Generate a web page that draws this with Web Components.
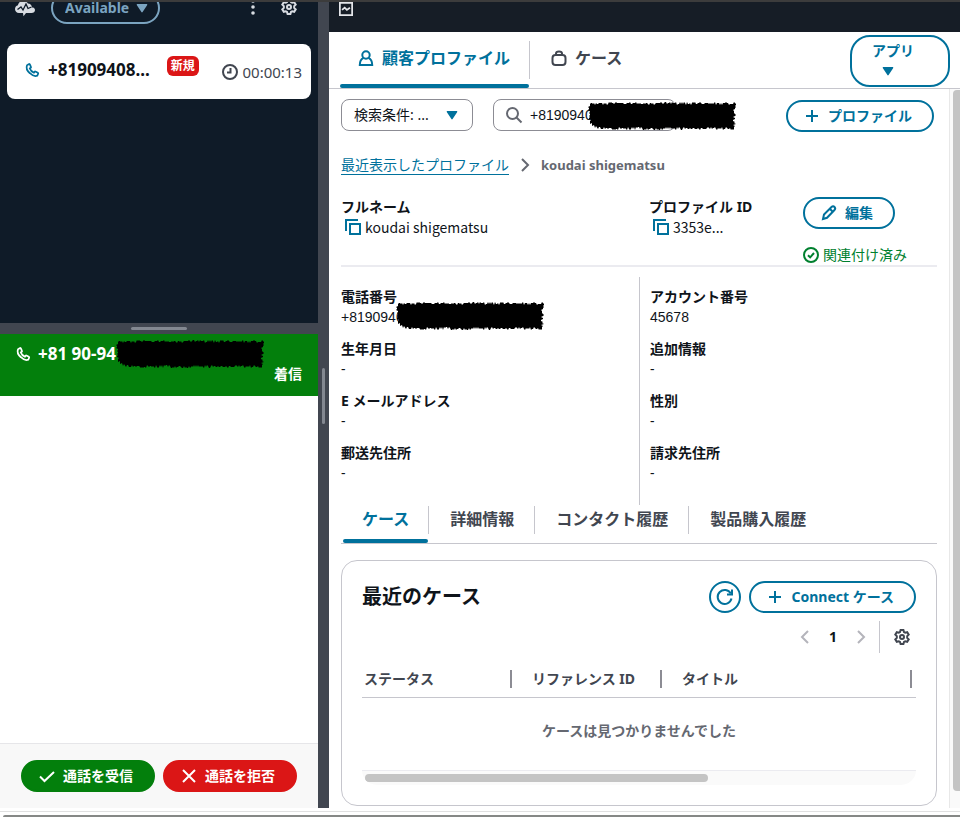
<!DOCTYPE html>
<html lang="ja">
<head>
<meta charset="utf-8">
<meta name="viewport" content="width=device-width, initial-scale=1">
<title>Agent workspace</title>
<style>
  :root {
    --teal: #00719c;
    --navy: #0f1b28;
    --slate: #414650;
    --ink: #0f141a;
    --gray: #656871;
    --line: #c6c6cd;
    --green: #037f0c;
    --red: #db1616;
    --arial: "Liberation Sans", "Noto Sans CJK JP", sans-serif;
  }
  body {
    margin: 0;
    font: 14px/20px "Noto Sans", "Noto Sans CJK JP", sans-serif;
    color: var(--ink);
    background: #fff;
  }
</style>
</head>
<body>
<agent-workspace></agent-workspace>

<script>
const ICONS = {
  phone: '<path d="M4.6 1.2 2.3 2.6C1 5.900 3 9.500 5.600 11.700c2.600 2.500 5.700 3.900 8.500 2.700l1-2.300c.1-.4 0-.7-.4-.9L11.900 9.700c-.3-.2-.7-.1-.9.2l-.8 1.100C8.200 10.200 6.200 8.200 5.500 6.200l1.100-.8c.3-.2.400-.6.200-.9L5.500 1.500c-.2-.4-.6-.5-.9-.3z"/>',
  clock: '<circle cx="8" cy="8" r="7"/><path d="M8.500 4v4.500H5"/>',
  user: '<circle cx="8" cy="5" r="3.700"/><path d="M5.500 7.800C3 9 1.800 11.500 1.800 15h12.400c0-3.500-1.200-6-3.700-7.200"/>',
  bag: '<rect x="1.500" y="5" width="13" height="10" rx="3"/><path d="M5 5V3.500C5 2 6 1.500 8 1.500s3 .5 3 2V5"/>',
  search: '<circle cx="6.500" cy="6.500" r="5.500"/><path d="m10.500 10.500 5 5"/>',
  plus: '<path d="M8 2v12M2 8h12"/>',
  check: '<path d="m1 8.500 4.500 4.500L15 4"/>',
  close: '<path d="m2 2 12 12M14 2 2 14"/>',
  copy: '<path d="M1 12V1h12"/><rect x="5" y="5" width="10" height="10"/>',
  edit: '<path d="m2 14 1-4.500 7.500-7.500c1-.9 2.200-.9 3 0s.9 2.100 0 3L6 12.800z"/><path d="m9 4 3 3"/>',
  done: '<circle cx="8" cy="8" r="7"/><path d="m5 8.200 2.200 2.200L11 6"/>',
  refresh: '<path d="M14.500 9.500A7 7 0 1 1 13.800 4.500"/><path d="M15 .5V5.500h-5"/>',
  left: '<path d="M11 2 5 8l6 6"/>',
  right: '<path d="m5 2 6 6-6 6"/>',
  gear: '<path d="M6.600 1h2.800l.6 2 1.200.7 2-.5 1.500 2.400-1.500 1.500v1.800l1.500 1.500-1.500 2.400-2-.5-1.200.7-.6 2H6.600L6 13l-1.200-.7-2 .5-1.500-2.400 1.500-1.500V7.100L1.300 5.600l1.500-2.400 2 .5L6 3z"/><circle cx="8" cy="8" r="2"/>',
  dots: '<g fill="currentColor" stroke="none"><circle cx="8" cy="2" r="1.800"/><circle cx="8" cy="8" r="1.800"/><circle cx="8" cy="14" r="1.800"/></g>',
  caret: '<path fill="currentColor" stroke="none" d="M3.500 4h9c.7 0 1 .6.6 1.200L8.600 12c-.3.500-.9.500-1.200 0L2.900 5.200C2.500 4.600 2.800 4 3.500 4z"/>',
  cloud: '<path fill="currentColor" stroke="none" d="M4 13C1.500 13 0 11.200 0 9c0-1.900 1.200-3.400 3-3.800C3.400 2.500 5.600.8 8.300.8c2 0 3.700.9 4.600 2.600C15.300 3.500 17 5.200 17 7.500h1.200c1 .5 1.800 1.300 1.800 2.500 0 1.800-1.400 3-3.500 3H11l-2.500 3.200L8 13z"/><path stroke="#0f1b28" stroke-width="1.300" d="M2.500 9.500 6 7l2 3 3-6 2 4.500L16.500 7"/>',
  chart: '<rect x="1" y="1" width="14" height="14"/><path d="m3.500 9 3-2.500 2.500 2.500 3.500-2.500"/>'
};

class UiIcon extends HTMLElement {
  connectedCallback() {
    const name = this.getAttribute('name');
    const size = this.getAttribute('size') || 16;
    this.attachShadow({ mode: 'open' });
    this.shadowRoot.innerHTML = `
      <style>
        :host { display: inline-flex; flex: none; }
        svg {
          display: block;
          fill: none;
          stroke: currentColor;
          stroke-width: 2;
          overflow: visible;
        }
      </style>
      <svg width="${size}" height="${size}" viewBox="0 0 16 16" aria-hidden="true">${ICONS[name]}</svg>
    `;
  }
}
customElements.define('ui-icon', UiIcon);

// Rough black marker over private digits
class RedactedMark extends HTMLElement {
  constructor() {
    super();
    this.attachShadow({ mode: 'open' });
    let seed = 7;
    const jag = () => {
      seed = (seed * 75 + 74) % 65537;
      return [0, 1, 1, 1, 2, 2, 3][(seed >> 4) % 7];
    };
    const points = [];
    for (let x = 1; x < 147; x++) points.push(`${x},${jag()}`);
    for (let y = 2; y < 26; y++) points.push(`${148 - jag()},${y}`);
    for (let x = 146; x > 9; x--) points.push(`${x},${28 - jag()}`);
    points.push('8,24', '7,26', '6,23', '4,24', '4,21', '2,22', '2,19');
    for (let y = 18; y > 1; y--) points.push(`${jag()},${y}`);
    this.shadowRoot.innerHTML = `
      <style>
        :host { display: block; flex: none; }
        svg { display: block; }
      </style>
      <svg width="148" height="28" aria-hidden="true"><polygon points="${points.join(' ')}"/></svg>
    `;
  }
}
customElements.define('redacted-mark', RedactedMark);

class PillButton extends HTMLElement {
  connectedCallback() {
    const icon = this.getAttribute('icon');
    const label = this.getAttribute('label');
    this.attachShadow({ mode: 'open' });
    this.shadowRoot.innerHTML = `
      <style>
        :host { display: block; flex: none; }
        button {
          display: flex;
          align-items: center;
          gap: 8px;
          height: 32px;
          box-sizing: border-box;
          width: 100%;
          padding: 0 20px 0 16px;
          border: 2px solid var(--teal);
          border-radius: 16px;
          background: #fff;
          color: var(--teal);
          font: inherit;
          font-weight: 700;
          white-space: nowrap;
        }
        :host([kind="accept"]) button,
        :host([kind="reject"]) button {
          color: #fff;
          background: var(--green);
          border-color: var(--green);
        }
        :host([kind="reject"]) button {
          background: var(--red);
          border-color: var(--red);
        }
        :host([kind="round"]) { width: 32px; }
        :host([kind="round"]) button { padding: 0; justify-content: center; }
        :host([kind="round"]) slot { display: none; }
      </style>
      <button type="button" ${label ? `aria-label="${label}"` : ''}>
        <ui-icon name="${icon}"></ui-icon><slot></slot>
      </button>
    `;
  }
}
customElements.define('pill-button', PillButton);

class ProfileField extends HTMLElement {
  constructor() {
    super();
    this.attachShadow({ mode: 'open' });
    this.shadowRoot.innerHTML = `
      <style>
        :host { display: block; }
        .label { font-weight: 700; }
        .value { display: flex; align-items: center; height: 20px; }
        :host([copy]) .value { font-family: "Noto Sans CJK JP", sans-serif; }
        :host([plain]) .value { font-family: var(--arial); }
        ui-icon { color: var(--teal); margin: 0 4px; }
      </style>
      <div class="label"><slot name="label"></slot></div>
      <div class="value"><slot></slot></div>
    `;
  }

  connectedCallback() {
    if (this.hasAttribute('copy')) {
      const icon = document.createElement('ui-icon');
      icon.setAttribute('name', 'copy');
      this.shadowRoot.querySelector('.value').prepend(icon);
    }
  }
}
customElements.define('profile-field', ProfileField);

class ContactList extends HTMLElement {
  constructor() {
    super();
    this.attachShadow({ mode: 'open' });
    this.shadowRoot.innerHTML = `
      <style>
        :host { display: block; background: var(--navy); color: #d8dce2; }
        header {
          display: flex;
          align-items: flex-end;
          height: 22px;
          overflow: hidden;
          padding: 0 21px 0 15px;
        }
        header > * { height: 32px; display: flex; align-items: center; }
        .status { position: relative; margin-left: 20px; color: #7ba4c0; }
        .status ui-icon { position: absolute; right: 10px; pointer-events: none; }
        select {
          appearance: none;
          width: 109px;
          height: 32px;
          padding: 0 12px;
          border: 2px solid #7ba4c0;
          border-radius: 16px;
          background: none;
          color: inherit;
          font: inherit;
          font-weight: 700;
        }
        .tools { margin-left: auto; gap: 20px; }
        .tools button { border: 0; padding: 0; background: none; color: inherit; }
        .card {
          display: flex;
          align-items: center;
          height: 55px;
          margin: 20px 7px;
          padding: 0 9px 0 18px;
          box-sizing: border-box;
          background: #fff;
          border-radius: 8px;
          color: var(--ink);
        }
        .phone, .number { margin-bottom: 3px; }
        .phone { color: var(--teal); }
        .number { margin-left: 9px; font-size: 17px; font-weight: 700; }
        .badge {
          margin: 0 0 12px 17px;
          padding: 0 4px;
          border-radius: 6px;
          background: var(--red);
          color: #fff;
          font-size: 12px;
          font-weight: 700;
        }
        .time { display: flex; align-items: center; gap: 4px; margin-left: auto; color: var(--slate); font-size: 15px; }
      </style>
      <header>
        <ui-icon name="cloud"></ui-icon>
        <div class="status">
          <select aria-label="Agent status"><option>Available</option></select>
          <ui-icon name="caret"></ui-icon>
        </div>
        <div class="tools">
          <button type="button" aria-label="Menu"><ui-icon name="dots"></ui-icon></button>
          <button type="button" aria-label="Settings"><ui-icon name="gear"></ui-icon></button>
        </div>
      </header>
      <div class="card">
        <ui-icon class="phone" name="phone" size="14"></ui-icon>
        <span class="number">+81909408...</span>
        <span class="badge">新規</span>
        <span class="time"><ui-icon name="clock"></ui-icon>00:00:13</span>
      </div>
    `;
  }
}
customElements.define('contact-list', ContactList);

class CallPanel extends HTMLElement {
  constructor() {
    super();
    this.attachShadow({ mode: 'open' });
    this.shadowRoot.innerHTML = `
      <style>
        :host { display: flex; flex-direction: column; }
        .call {
          height: 62px;
          padding: 6px 16px 0;
          box-sizing: border-box;
          background: var(--green);
          color: #fff;
          font-weight: 700;
        }
        .line { display: flex; align-items: center; height: 28px; font-size: 17px; }
        .line span { margin-left: 8px; }
        .state { text-align: right; margin-top: -4px; }
        footer {
          display: flex;
          gap: 8px;
          margin-top: auto;
          padding: 16px 21px;
          border-top: 1px solid #e6e6e9;
          background: #f8f8f8;
        }
        pill-button { flex: 1; }
      </style>
      <div class="call">
        <div class="line">
          <ui-icon name="phone" size="14"></ui-icon><span>+81 90-94</span><redacted-mark></redacted-mark>
        </div>
        <div class="state">着信</div>
      </div>
      <footer>
        <pill-button kind="accept" icon="check">通話を受信</pill-button>
        <pill-button kind="reject" icon="close">通話を拒否</pill-button>
      </footer>
    `;
  }
}
customElements.define('call-panel', CallPanel);

class AppTabs extends HTMLElement {
  constructor() {
    super();
    this.attachShadow({ mode: 'open' });
    this.shadowRoot.innerHTML = `
      <style>
        :host {
          display: flex;
          justify-content: space-between;
          height: 57px;
          box-sizing: border-box;
          padding: 0 10px 0 11px;
          border-bottom: 1px solid var(--line);
        }
        .tabs { display: flex; }
        .tabs button {
          position: relative;
          display: flex;
          align-items: center;
          gap: 8px;
          padding: 0 19px 4px;
          border: 0;
          background: none;
          color: var(--slate);
          font: inherit;
          font-size: 16px;
          font-weight: 700;
        }
        .tabs .active { padding-left: 18px; color: var(--teal); }
        .tabs .active::after {
          content: "";
          position: absolute;
          left: 0;
          right: 0;
          bottom: 0;
          height: 4px;
          border-radius: 2px;
          background: var(--teal);
        }
        .tabs i { width: 1px; height: 38px; margin: 9px 2px 0 0; background: var(--line); }
        .apps {
          display: flex;
          flex-direction: column;
          align-items: flex-start;
          gap: 2px;
          width: 100px;
          height: 52px;
          margin-top: 3px;
          padding: 4px 20px;
          border: 2px solid var(--teal);
          border-radius: 20px;
          background: #fff;
          color: var(--teal);
          font: inherit;
          font-weight: 700;
        }
        .apps ui-icon { margin-left: 8px; }
      </style>
      <div class="tabs" role="tablist">
        <button type="button" role="tab" class="active" aria-selected="true"><ui-icon name="user"></ui-icon>顧客プロファイル</button>
        <i></i>
        <button type="button" role="tab"><ui-icon name="bag"></ui-icon>ケース</button>
      </div>
      <button type="button" class="apps">アプリ<ui-icon name="caret"></ui-icon></button>
    `;
  }
}
customElements.define('app-tabs', AppTabs);

class ProfileSearch extends HTMLElement {
  constructor() {
    super();
    this.attachShadow({ mode: 'open' });
    this.shadowRoot.innerHTML = `
      <style>
        :host { display: flex; align-items: flex-start; gap: 20px; }
        .box {
          position: relative;
          display: flex;
          align-items: center;
          height: 32px;
          box-sizing: border-box;
          border: 1px solid #8c8c94;
          border-radius: 8px;
        }
        .filter { width: 132px; }
        .filter ui-icon { position: absolute; right: 12px; color: var(--teal); pointer-events: none; }
        select {
          appearance: none;
          width: 100%;
          height: 30px;
          padding: 0 12px;
          border: 0;
          background: none;
          color: inherit;
          font: inherit;
        }
        .query { width: 183px; padding-left: 12px; gap: 8px; color: var(--gray); }
        input {
          width: 120px;
          padding: 0;
          border: 0;
          background: none;
          color: var(--ink);
          font: inherit;
          font-family: var(--arial);
        }
        redacted-mark { position: absolute; left: 94px; top: 2px; }
        pill-button { margin: 1px 3px 0 auto; }
      </style>
      <div class="box filter">
        <select aria-label="検索条件"><option>検索条件: ...</option></select>
        <ui-icon name="caret"></ui-icon>
      </div>
      <div class="box query">
        <ui-icon name="search"></ui-icon>
        <input type="text" aria-label="検索" value="+8190940">
        <redacted-mark></redacted-mark>
      </div>
      <pill-button icon="plus">プロファイル</pill-button>
    `;
  }
}
customElements.define('profile-search', ProfileSearch);

class ProfileSummary extends HTMLElement {
  constructor() {
    super();
    this.attachShadow({ mode: 'open' });
    this.shadowRoot.innerHTML = `
      <style>
        :host { display: block; }
        nav { display: flex; align-items: center; gap: 8px; height: 20px; margin: 23px 0 22px; color: var(--gray); }
        nav span { font-size: 13px; font-weight: 700; }
        a {
          color: var(--teal);
          text-decoration: none;
          border-bottom: 1px solid var(--teal);
          line-height: 19px;
        }
        .top {
          display: grid;
          grid-template-columns: 2fr 1fr 134px;
          height: 68px;
          border-bottom: 2px solid #ebebf0;
        }
        .edit { width: 92px; }
        .linked {
          display: flex;
          align-items: center;
          gap: 4px;
          margin-top: 16px;
          color: #00802f;
        }
        .details { display: grid; grid-template-columns: 1fr 1fr; margin-top: 10px; }
        .column { display: flex; flex-direction: column; gap: 12px; padding: 10px 0 22px; }
        .column + .column { padding-left: 10px; border-left: 1px solid var(--line); }
        redacted-mark { margin: -2px 0 0 -8px; }
      </style>
      <nav aria-label="パンくずリスト">
        <a href="#">最近表示したプロファイル</a>
        <ui-icon name="right"></ui-icon>
        <span>koudai shigematsu</span>
      </nav>
      <div class="top">
        <profile-field copy><span slot="label">フルネーム</span>koudai shigematsu</profile-field>
        <profile-field copy><span slot="label">プロファイル ID</span>3353e...</profile-field>
        <div>
          <pill-button class="edit" icon="edit">編集</pill-button>
          <div class="linked"><ui-icon name="done"></ui-icon>関連付け済み</div>
        </div>
      </div>
      <div class="details">
        <div class="column">
          <profile-field plain><span slot="label">電話番号</span>+8190940<redacted-mark></redacted-mark></profile-field>
          <profile-field><span slot="label">生年月日</span>-</profile-field>
          <profile-field><span slot="label">E メールアドレス</span>-</profile-field>
          <profile-field><span slot="label">郵送先住所</span>-</profile-field>
        </div>
        <div class="column">
          <profile-field plain><span slot="label">アカウント番号</span>45678</profile-field>
          <profile-field><span slot="label">追加情報</span>-</profile-field>
          <profile-field><span slot="label">性別</span>-</profile-field>
          <profile-field><span slot="label">請求先住所</span>-</profile-field>
        </div>
      </div>
    `;
  }
}
customElements.define('profile-summary', ProfileSummary);

class HistoryTabs extends HTMLElement {
  constructor() {
    super();
    this.attachShadow({ mode: 'open' });
    const tabs = ['ケース', '詳細情報', 'コンタクト履歴', '製品購入履歴'];
    this.shadowRoot.innerHTML = `
      <style>
        :host { display: flex; height: 39px; box-sizing: border-box; padding-left: 2px; border-bottom: 1px solid var(--line); }
        button {
          position: relative;
          padding: 0 20px 10px;
          border: 0;
          background: none;
          color: var(--slate);
          font: inherit;
          font-size: 16px;
          font-weight: 700;
        }
        button:first-of-type { color: var(--teal); padding: 0 19px 10px; }
        button:first-of-type::after {
          content: "";
          position: absolute;
          left: 0;
          right: 0;
          bottom: 0;
          height: 4px;
          border-radius: 2px;
          background: var(--teal);
        }
        i { width: 1px; height: 28px; margin: 1px 1px 0 0; background: var(--line); }
      </style>
      ${tabs.map(tab => `<button type="button" role="tab">${tab}</button>`).join('<i></i>')}
    `;
  }
}
customElements.define('history-tabs', HistoryTabs);

class CaseCard extends HTMLElement {
  constructor() {
    super();
    this.attachShadow({ mode: 'open' });
    this.shadowRoot.innerHTML = `
      <style>
        :host {
          display: block;
          margin-top: 16px;
          padding: 20px;
          border: 1px solid var(--line);
          border-radius: 16px;
        }
        header { display: flex; align-items: center; gap: 8px; }
        h2 { margin: 0 auto 0 0; font-size: 20px; line-height: 32px; font-weight: 700; }
        .pages { display: flex; justify-content: flex-end; align-items: center; height: 32px; margin-top: 8px; }
        .pages button { display: flex; padding: 0; border: 0; background: none; color: #b4b4bb; font: inherit; }
        .pages b { width: 40px; text-align: center; }
        .pages .settings { margin-left: 10px; padding: 8px 6px 8px 14px; border-left: 1px solid var(--line); color: var(--slate); }
        table { width: 100%; margin-top: 8px; border-collapse: collapse; table-layout: fixed; }
        .narrow { width: 150px; }
        th {
          height: 36px;
          padding: 0;
          border-bottom: 1px solid var(--line);
          color: var(--slate);
          text-align: left;
        }
        th div { padding-left: 20px; border-right: 2px solid #8c8c94; line-height: 18px; }
        th:first-child div { padding-left: 2px; }
        th:last-child { padding-right: 4px; }
        td { height: 66px; padding: 0 0 6px; color: var(--gray); font-weight: 700; text-align: center; }
        .scroll { height: 14px; border-top: 1px solid #ebebf0; border-radius: 0 0 16px 16px; background: #fafafa; overflow: hidden; }
        .scroll div { width: 62%; height: 8px; margin: 3px; border-radius: 4px; background: #c4c4c4; }
      </style>
      <header>
        <h2>最近のケース</h2>
        <pill-button kind="round" icon="refresh" label="更新"></pill-button>
        <pill-button icon="plus">Connect ケース</pill-button>
      </header>
      <div class="pages">
        <button type="button" aria-label="前のページ"><ui-icon name="left"></ui-icon></button>
        <b>1</b>
        <button type="button" aria-label="次のページ"><ui-icon name="right"></ui-icon></button>
        <button type="button" class="settings" aria-label="設定"><ui-icon name="gear"></ui-icon></button>
      </div>
      <table>
        <colgroup><col class="narrow"><col class="narrow"><col></colgroup>
        <thead>
          <tr><th><div>ステータス</div></th><th><div>リファレンス ID</div></th><th><div>タイトル</div></th></tr>
        </thead>
        <tbody>
          <tr><td colspan="3">ケースは見つかりませんでした</td></tr>
        </tbody>
      </table>
      <div class="scroll"><div></div></div>
    `;
  }
}
customElements.define('case-card', CaseCard);

class AgentWorkspace extends HTMLElement {
  constructor() {
    super();
    this.attachShadow({ mode: 'open' });
    this.shadowRoot.innerHTML = `
      <style>
        :host { display: flex; flex-direction: column; min-height: 100vh; box-sizing: border-box; border-top: 2px solid #3c3c3c; }
        .panes { flex: 1; display: grid; grid-template-columns: 318px 11px 1fr; }
        aside { display: flex; flex-direction: column; }
        contact-list { flex: 0 0 321px; }
        call-panel { flex: 1; }
        .split { display: flex; align-items: center; justify-content: center; background: var(--slate); }
        .split.rows { height: 11px; }
        .split::after { content: ""; border-radius: 2px; background: #838891; }
        .split.rows::after { width: 56px; height: 3px; }
        .split.cols::after { width: 3px; height: 56px; margin-bottom: 18px; }
        main { display: flex; flex-direction: column; min-width: 0; }
        .bar { height: 30px; padding-left: 10px; background: #161d26; color: #e4e6ea; line-height: 16px; }
        .body { flex: 1; display: grid; grid-template-columns: 1fr 11px; }
        .content { padding: 10px 12px 2px; min-width: 0; }
        .rail { box-sizing: border-box; padding: 1px 0 17px 3px; border-left: 1px solid #e8e8e8; background: #fafafa; display: flex; }
        .rail div { flex: 1; border-radius: 4px 0 0 4px; background: #c4c4c4; }
        .bottom { height: 9px; box-sizing: border-box; padding-top: 3px; }
        .bottom::before { content: ""; display: block; height: 1px; background: #e0e0e0; }
        .bottom::after { content: ""; display: block; height: 2px; margin: 3px 0 0 3px; border-radius: 3px 0 0 0; background: #868886; }
      </style>
      <div class="panes">
        <aside>
          <contact-list></contact-list>
          <div class="split rows"></div>
          <call-panel></call-panel>
        </aside>
        <div class="split cols"></div>
        <main>
          <div class="bar"><ui-icon name="chart" size="14"></ui-icon></div>
          <app-tabs></app-tabs>
          <div class="body">
            <div class="content">
              <profile-search></profile-search>
              <profile-summary></profile-summary>
              <history-tabs></history-tabs>
              <case-card></case-card>
            </div>
            <div class="rail"><div></div></div>
          </div>
        </main>
      </div>
      <div class="bottom"></div>
    `;
  }
}
customElements.define('agent-workspace', AgentWorkspace);
</script>
</body>
</html>
